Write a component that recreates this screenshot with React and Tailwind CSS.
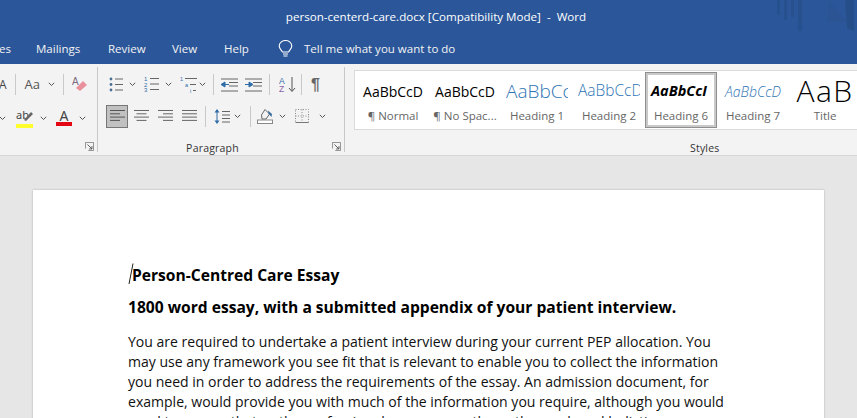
import React from "react";

const Chevron = ({ className = "" }) => (
  <svg width="7" height="5" viewBox="0 0 7 5" className={`shrink-0 ${className}`}>
    <path d="M0.8 0.8 L3.5 3.5 L6.2 0.8" fill="none" stroke="#555" strokeWidth="1" />
  </svg>
);

const Sep = ({ h = "h-[21px]" }) => <div className={`w-px ${h} bg-[#c9c9c9] shrink-0`} />;

const Launcher = () => (
  <svg width="9" height="9" viewBox="0 0 11 11">
    <path d="M0.5 8 V0.5 H10.5 V10.5 H4" fill="none" stroke="#777" />
    <path d="M3 3 L8.5 8.5 M8.5 5 V8.5 H5" fill="none" stroke="#444" />
  </svg>
);

const Lines = ({ rows, stroke = "#666", w = 20 }) => (
  <svg width={w} height="14" viewBox={`0 0 ${w} 14`}>
    {rows.map(([x1, x2], i) => (
      <path key={i} d={`M${x1} ${1.5 + i * 3.3} H${x2}`} stroke={stroke} strokeWidth="1" />
    ))}
  </svg>
);

const Bullets = () => (
  <svg width="15" height="15" viewBox="0 0 15 15">
    {[2, 7.5, 13].map((y) => (
      <g key={y}>
        <circle cx="2" cy={y} r="1.4" fill="#4a6f95" />
        <path d={`M6 ${y} H14`} stroke="#666" />
      </g>
    ))}
  </svg>
);

const Numbers = () => (
  <svg width="16" height="17" viewBox="0 0 16 17">
    {[[5, "1"], [10.5, "2"], [16, "3"]].map(([y, n]) => (
      <g key={n}>
        <text x="0" y={y} fontSize="6" fill="#2f6ca8" fontFamily="Liberation Sans">{n}</text>
        <path d={`M6 ${y - 2.5} H15`} stroke="#666" />
      </g>
    ))}
  </svg>
);

const Multi = () => (
  <svg width="18" height="17" viewBox="0 0 18 17">
    <text x="0" y="5" fontSize="5.5" fill="#2f6ca8" fontFamily="Liberation Sans">1</text>
    <path d="M5 2.5 H17" stroke="#666" />
    <text x="5" y="11" fontSize="5.5" fill="#2f6ca8" fontFamily="Liberation Sans">a</text>
    <path d="M10 8.5 H16" stroke="#666" />
    <text x="10" y="16.5" fontSize="5.5" fill="#2f6ca8" fontFamily="Liberation Sans">i</text>
    <path d="M13 14.5 H16" stroke="#666" />
  </svg>
);

const Indent = ({ flip }) => (
  <svg width="17" height="14" viewBox="0 0 17 14">
    <path d="M0 1 H17 M8 4.5 H17 M8 8 H17 M0 13 H17" stroke="#666" />
    <path d={flip ? "M0 6.5 H4 V4 L8 6.5 L4 9 V6.5" : "M8 6.5 H4 V4 L0 6.5 L4 9 V6.5"} stroke="#2f6ca8" fill="#2f6ca8" />
  </svg>
);

const Sort = () => (
  <svg width="17" height="17" viewBox="0 0 17 17">
    <text x="0" y="7.5" fontSize="8.5" fill="#2f6ca8" fontFamily="Liberation Sans">A</text>
    <text x="0" y="16" fontSize="8.5" fill="#8a63a8" fontFamily="Liberation Sans">Z</text>
    <path d="M13 1 V15 M10 12 L13 15.5 L16 12" stroke="#555" fill="none" />
  </svg>
);

const Shading = () => (
  <svg width="16" height="16" viewBox="0 0 16 16">
    <path d="M4.5 7 L8 1.5 L12.5 6 L9 11 H5 Z" fill="none" stroke="#666" />
    <path d="M11 2.5 L15 6 L14.5 9 L11.5 5.5 Z" fill="#3a6d9e" />
    <rect x="0.5" y="12" width="15" height="3.5" fill="#fff" stroke="#888" />
  </svg>
);

const Borders = () => (
  <svg width="14" height="14" viewBox="0 0 14 14">
    <path d="M0.5 0.5 H13.5 V13.5 H0.5 Z M7 0.5 V13.5 M0.5 7 H13.5" fill="none" stroke="#8a8a8a" strokeDasharray="1 1.5" />
    <path d="M0.5 13.5 H13.5" stroke="#777" />
  </svg>
);

const Eraser = () => (
  <svg width="16" height="18" viewBox="0 0 16 18">
    <text x="0" y="9" fontSize="10" fill="#7a6a80" fontFamily="Liberation Sans">A</text>
    <path d="M4 12 L11 5 L15 9 L8 15 Z" fill="#e8909b" />
  </svg>
);

const Highlight = () => (
  <div className="relative w-[17px] h-[17px]">
    <span className="absolute left-0 top-[-2px] text-[11px] leading-[13px] text-[#444] font-['Noto_Sans',sans-serif]">ab</span>
    <svg width="12" height="12" viewBox="0 0 12 12" className="absolute left-[6px] top-0">
      <path d="M2 10 L9 2 L11 4 L4 11 Z" fill="#666" />
    </svg>
    <div className="absolute left-0 bottom-[-1px] w-[17px] h-[4px] bg-[#ffff2e]" />
  </div>
);

const FontColor = () => (
  <div className="flex flex-col items-center w-[16px]">
    <span className="text-[14px] leading-[12px] text-[#444] font-['Noto_Sans',sans-serif]">A</span>
    <div className="w-[16px] h-[4px] bg-[#e40613]" />
  </div>
);

const StyleCard = ({ sample, label, sampleClass, selected }) => (
  <div
    className={`w-[72px] h-[56px] shrink-0 flex flex-col ${
      selected ? "shadow-[inset_0_0_0_1px_#8f8f8f,inset_0_0_0_3px_#c9c9c9]" : ""
    }`}
  >
    <div className={`h-[38px] mx-[5px] flex items-center whitespace-nowrap overflow-hidden ${sampleClass}`}>
      {sample}
    </div>
    <div className="flex justify-center text-[11.5px] leading-[12px] text-[#666] whitespace-nowrap">{label}</div>
  </div>
);

const App = () => {
  return (
    <div className="w-[857px] h-[418px] overflow-hidden bg-[#e6e6e6] font-['Open_Sans',sans-serif] flex flex-col">
      {/* title bar */}
      <div className="relative h-[32px] bg-[#2b579a] flex items-center justify-center shrink-0 pl-[15px] pt-[1px]">
        <span className="text-[11.6px] text-white whitespace-pre">person-centerd-care.docx [Compatibility Mode]  -  Word</span>
        <svg width="80" height="32" viewBox="0 0 80 32" className="absolute right-0 top-0">
          <path d="M0 0 H3 V15 H0 Z M7 0 H10 V20 H7 Z M14 0 H17 V17 H14 Z M21 0 H25 V31 H21 Z" fill="#27518e" />
          <path d="M52 0 L70 22 H50 Z" fill="#2a5493" />
          <path d="M68 0 H77 V31 L70 28 Z" fill="#264f8a" />
        </svg>
      </div>

      {/* tabs */}
      <div className="h-[32px] bg-[#2b579a] flex items-center text-[11.5px] text-[#f3f3f3] shrink-0 relative pt-[1px]">
        <span className="absolute left-0 -translate-x-[1px]">es</span>
        <div className="flex items-center pl-[36px]">
          <span className="w-[72px]">Mailings</span>
          <span className="w-[64px]">Review</span>
          <span className="w-[52px]">View</span>
          <span className="w-[54px]">Help</span>
          <svg width="15" height="18" viewBox="0 0 15 18" className="mr-[11px]">
            <path d="M4.5 12 C3 9.5 1.2 8.5 1.2 6 A6.2 5.4 0 0 1 13.8 6 C13.8 8.5 12 9.5 10.5 12 Z" fill="none" stroke="#fff" strokeWidth="1.1" />
            <path d="M5 14 H10 M5.5 16 H9.5" stroke="#fff" strokeWidth="1.1" />
          </svg>
          <span>Tell me what you want to do</span>
        </div>
      </div>

      {/* ribbon */}
      <div className="h-[92px] bg-[#f3f3f3] border-b border-[#d6d6d6] flex shrink-0">
        {/* font group (cut off) */}
        <div className="w-[98px] shrink-0 relative border-r border-[#c8c8c8] my-[3px] flex flex-col">
          <div className="flex items-center h-[23px] mt-[6px] gap-[8px] pl-[1px]">
            <span className="text-[12px] leading-none text-[#444] -ml-[2px]">A</span>
            <Sep />
            <span className="text-[13px] leading-none text-[#555] ml-[1px]">Aa</span>
            <Chevron />
            <Sep />
            <Eraser />
          </div>
          <div className="flex items-center h-[24px] mt-[10px]">
            <Chevron className="ml-[-1px]" />
            <div className="ml-[10px]"><Highlight /></div>
            <Chevron className="ml-[7px]" />
            <div className="ml-[9px]"><FontColor /></div>
            <Chevron className="ml-[7px]" />
          </div>
          <div className="absolute right-[3px] bottom-[1px] flex"><Launcher /></div>
        </div>

        {/* paragraph group */}
        <div className="w-[247px] shrink-0 relative border-r border-[#c8c8c8] my-[3px] flex flex-col">
          <div className="flex items-center h-[23px] mt-[6px] pl-[11px]">
            <Bullets />
            <Chevron className="ml-[5px]" />
            <div className="ml-[8px] flex"><Numbers /></div>
            <Chevron className="ml-[5px]" />
            <div className="ml-[8px] flex"><Multi /></div>
            <Chevron className="ml-[1px]" />
            <div className="ml-[7px]"><Sep /></div>
            <div className="ml-[7px] flex"><Indent /></div>
            <div className="ml-[7px] flex"><Indent flip /></div>
            <div className="ml-[7px]"><Sep /></div>
            <div className="ml-[9px] flex"><Sort /></div>
            <div className="ml-[5px]"><Sep /></div>
            <span className="ml-[9px] text-[16px] leading-none font-bold text-[#666] font-['Liberation_Sans',sans-serif]">¶</span>
          </div>
          <div className="flex items-center h-[24px] mt-[8px] pl-[8px]">
            <div className="w-[22px] h-[23px] bg-[#c1c1c1] border border-[#777] flex items-center justify-center">
              <Lines w={15} rows={[[0, 15], [0, 10], [0, 15], [0, 10]]} stroke="#555" />
            </div>
            <div className="ml-[6px] flex"><Lines w={15} rows={[[0, 15], [2.5, 12.5], [0, 15], [2.5, 12.5]]} /></div>
            <div className="ml-[9px] flex"><Lines w={15} rows={[[0, 15], [5, 15], [0, 15], [5, 15]]} /></div>
            <div className="ml-[9px] flex"><Lines w={15} rows={[[0, 15], [0, 15], [0, 15], [0, 15]]} /></div>
            <div className="ml-[8px]"><Sep /></div>
            <svg width="16" height="17" viewBox="0 0 16 17" className="ml-[8px]">
              <path d="M3 2 V15" stroke="#2f6ca8" />
              <path d="M0.5 4.5 L3 1 L5.5 4.5 Z M0.5 12.5 L3 16 L5.5 12.5 Z" fill="#2f6ca8" />
              <path d="M8 3.5 H16 M8 7 H16 M8 10.5 H16 M8 14 H16" stroke="#666" />
            </svg>
            <Chevron className="ml-[4px]" />
            <div className="ml-[9px]"><Sep /></div>
            <div className="ml-[6px] flex"><Shading /></div>
            <Chevron className="ml-[6px]" />
            <div className="ml-[9px] flex"><Borders /></div>
            <Chevron className="ml-[10px]" />
          </div>
          <div className="absolute left-0 bottom-[-3px] w-[229px] text-center text-[10.5px] leading-[14px] text-[#333] tracking-[0.2px]">Paragraph</div>
          <div className="absolute right-[3px] bottom-[1px] flex"><Launcher /></div>
        </div>

        {/* styles group */}
        <div className="flex-1 relative pl-[9px]">
          <div className="mt-[6px] h-[60px] bg-white border border-[#dadada] border-r-0 flex items-center pl-[2px]">
            <StyleCard sample="AaBbCcD" label="¶ Normal" sampleClass="justify-center text-[14px] text-black" />
            <StyleCard sample="AaBbCcD" label="¶ No Spac..." sampleClass="justify-center text-[14px] text-black" />
            <StyleCard sample="AaBbCc" label="Heading 1" sampleClass="justify-start text-[19px] font-light text-[#2e74b5]" />
            <StyleCard sample="AaBbCcD" label="Heading 2" sampleClass="justify-start text-[15.5px] font-light text-[#2e74b5]" />
            <StyleCard selected sample="AaBbCcI" label="Heading 6" sampleClass="justify-start pl-[1px] text-[14.5px] font-bold italic text-black" />
            <StyleCard sample="AaBbCcD" label="Heading 7" sampleClass="justify-center text-[14px] font-light italic text-[#2e74b5]" />
            <StyleCard sample="AaB" label="Title" sampleClass="justify-center text-[30px] leading-[34px] text-black tracking-[1.5px] font-light" />
          </div>
          <div className="absolute left-[345px] bottom-[0px] text-[10.5px] leading-[14px] text-[#333] tracking-[0.2px]">Styles</div>
        </div>
      </div>

      {/* document area */}
      <div className="flex-1 overflow-hidden pt-[34px] pl-[33px]">
        <div className="w-[791px] h-[400px] bg-white shadow-[0_0_2px_rgba(0,0,0,0.25)] pl-[95px] pt-[74px] text-black">
          <div className="relative text-[15.6px] font-bold leading-[22px] pl-[4px]">
            <svg width="6" height="22" viewBox="0 0 6 22" className="absolute left-0 -top-[1px]">
              <path d="M5 0.5 L1 21" stroke="#222" strokeWidth="1" />
            </svg>
            Person-Centred Care Essay
          </div>
          <div className="mt-[10px] text-[15.6px] font-bold leading-[22px] whitespace-nowrap">
            1800 word essay, with a submitted appendix of your patient interview.
          </div>
          <div className="mt-[14px] text-[14.04px] leading-[20px] text-[#111] whitespace-nowrap">
            <div>You are required to undertake a patient interview during your current PEP allocation. You</div>
            <div>may use any framework you see fit that is relevant to enable you to collect the information</div>
            <div>you need in order to address the requirements of the essay. An admission document, for</div>
            <div>example, would provide you with much of the information you require, although you would</div>
            <div>need to ensure that as the professional nurse you gather a thorough and holistic</div>
          </div>
        </div>
      </div>
    </div>
  );
};

export default App;
